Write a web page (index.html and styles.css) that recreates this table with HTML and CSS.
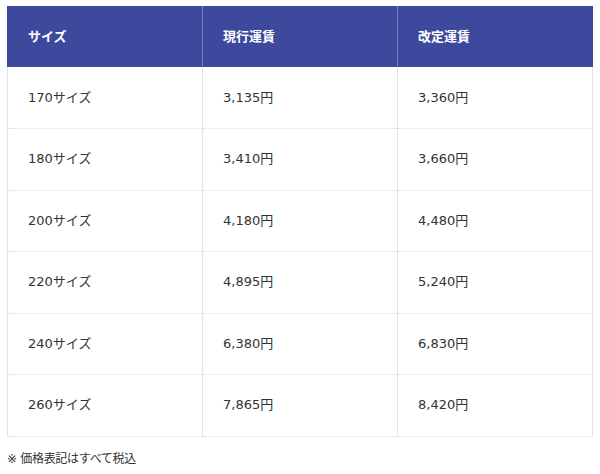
FILE: index.html
```html
<!DOCTYPE html>
<html lang="ja">
<head>
<meta charset="utf-8">
<link rel="stylesheet" href="styles.css">
</head>
<body>
<div class="wrap">
<table class="fare">
<thead>
<tr><th>サイズ</th><th>現行運賃</th><th>改定運賃</th></tr>
</thead>
<tbody>
<tr><td>170サイズ</td><td>3,135円</td><td>3,360円</td></tr>
<tr><td>180サイズ</td><td>3,410円</td><td>3,660円</td></tr>
<tr><td>200サイズ</td><td>4,180円</td><td>4,480円</td></tr>
<tr><td>220サイズ</td><td>4,895円</td><td>5,240円</td></tr>
<tr><td>240サイズ</td><td>6,380円</td><td>6,830円</td></tr>
<tr><td>260サイズ</td><td>7,865円</td><td>8,420円</td></tr>
</tbody>
</table>
<p class="note">※ 価格表記はすべて税込</p>
</div>
</body>
</html>
```
FILE: styles.css
```css
html, body {
  margin: 0;
  padding: 0;
  background: #fff;
}
.wrap {
  padding: 6px 7px 0 7px;
  font-family: "DejaVu Sans", "Noto Sans CJK JP", sans-serif;
  color: #333;
}
.fare {
  width: 586px;
  border-collapse: collapse;
  table-layout: fixed;
  font-size: 13px;
}
.fare th {
  background: #3c499d;
  color: #fff;
  font-weight: bold;
  text-align: left;
  height: 61px;
  padding: 0 20px 3px 20px;
  box-sizing: border-box;
  border-left: 1px solid #7880bf;
}
.fare th:first-child {
  border-left: 1px solid #3c499d;
}
.fare th:last-child {
  border-right: 1px solid #3c499d;
}
.fare td {
  height: 61.5px;
  padding: 0 20px 3px 20px;
  box-sizing: border-box;
  border-left: 1px solid #e3e3e3;
  border-right: 1px solid #e3e3e3;
  border-bottom: 1px dotted #dcdcdc;
}
.note {
  margin: 13px 0 0 0;
  font-size: 12px;
  line-height: 18px;
  letter-spacing: -0.3px;
  color: #333;
}
```
